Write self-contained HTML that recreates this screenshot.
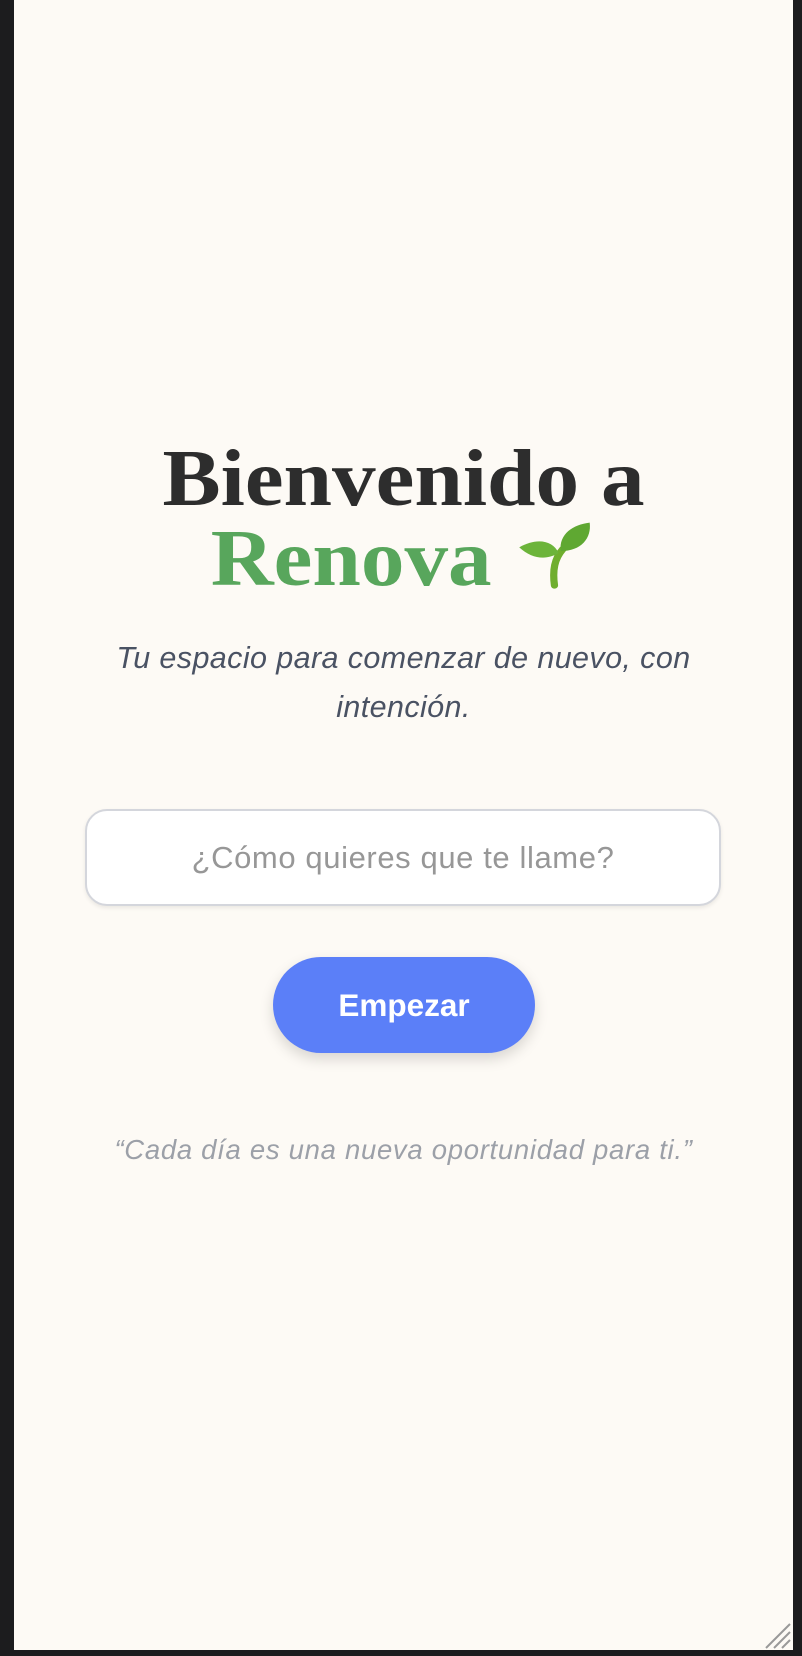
<!DOCTYPE html>
<html><head><meta charset="utf-8"><style>
html,body{margin:0;padding:0;width:802px;height:1656px;background:#1c1c1e;overflow:hidden}
.page{position:absolute;left:14px;top:0;width:779px;height:1650px;background:#fdfaf5}
h1{position:absolute;left:0;width:779px;top:439px;margin:0;text-align:center;font-family:"Liberation Serif",serif;font-weight:bold;font-size:80px;line-height:80px;color:#2d2d2d;transform:scaleX(1.09);transform-origin:center}
h1 .g{color:#58a65c}
.sub{position:absolute;left:40px;width:699px;top:634px;text-align:center;font-family:"Liberation Sans",sans-serif;font-style:italic;font-size:30.5px;letter-spacing:.4px;line-height:49px;color:#4a5263}
.inp{position:absolute;left:71px;top:809px;width:636px;height:97px;box-sizing:border-box;background:#fff;border:2px solid #d4d6dc;border-radius:22px;box-shadow:0 2px 4px rgba(0,0,0,.08);text-align:center;font-family:"Liberation Sans",sans-serif;font-size:31px;letter-spacing:.6px;line-height:93px;color:#979797}
.btn{position:absolute;left:259px;top:957px;width:262px;height:96px;border-radius:48px;background:#5b7ff8;box-shadow:0 6px 14px rgba(0,0,0,.15);color:#fff;text-align:center;font-family:"Liberation Sans",sans-serif;font-weight:bold;font-size:31.5px;line-height:96px}
.q{position:absolute;left:0;width:779px;top:1134px;text-align:center;font-family:"Liberation Sans",sans-serif;font-style:italic;font-size:27.5px;letter-spacing:.7px;color:#9ca0a8}
</style></head><body>
<div class="page">
<h1>Bienvenido a<br><span class="g">Renova</span> <svg width="76" height="70" viewBox="0 0 80 70" style="vertical-align:-4px"><path d="M40 68 C38 52 40 40 48 30" stroke="#6fae2e" stroke-width="7" fill="none" stroke-linecap="round"/><path d="M46 32 C44 14 58 4 74 2 C76 18 66 32 46 32Z" fill="#5fa832"/><path d="M44 34 C38 20 22 18 6 28 C18 40 32 42 44 34Z" fill="#6cb43a"/></svg></h1>
<div class="sub">Tu espacio para comenzar de nuevo, con intención.</div>
<div class="inp">¿Cómo quieres que te llame?</div>
<div class="btn">Empezar</div>
<div class="q">“Cada día es una nueva oportunidad para ti.”</div>
<svg style="position:absolute;left:750px;top:1622px" width="28" height="28" viewBox="0 0 28 28"><path d="M2 26 L26 2 M10 26 L26 10 M18 26 L26 18" stroke="#999" stroke-width="2"/></svg>
</div>
</body></html>
